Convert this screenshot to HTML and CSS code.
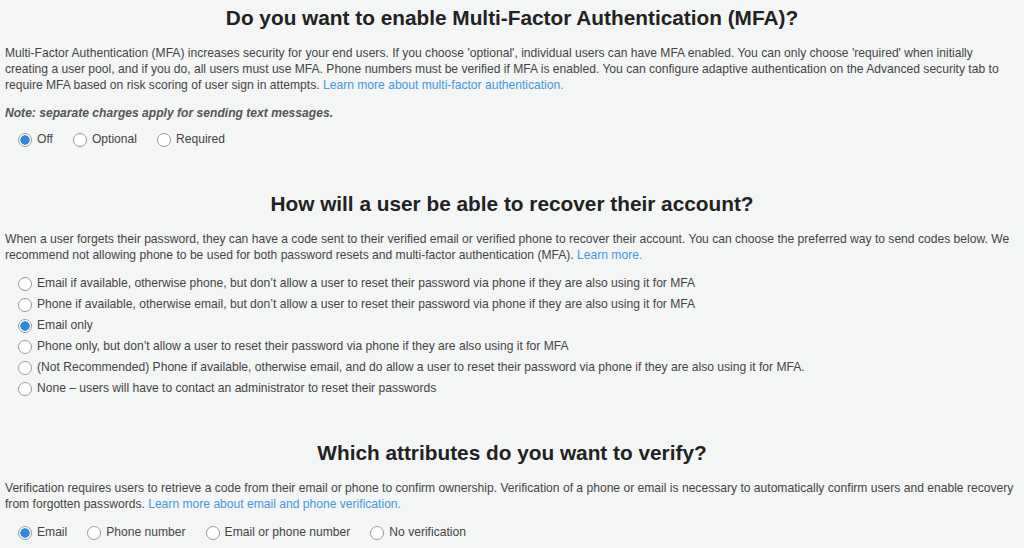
FILE: index.html
```html
<!DOCTYPE html>
<html lang="en">
<head>
    <meta charset="UTF-8">
    <meta name="viewport" content="width=device-width, initial-scale=1.0">
    <title>MFA and verifications</title>
    <link rel="stylesheet" href="styles.css">
</head>
<body>
    <div class="section">
        <h2>Do you want to enable Multi-Factor Authentication (MFA)?</h2>
        <p>Multi-Factor Authentication (MFA) increases security for your end users. If you choose 'optional', individual users can have MFA enabled. You can only choose 'required' when initially creating a user pool, and if you do, all users must use MFA. Phone numbers must be verified if MFA is enabled. You can configure adaptive authentication on the Advanced security tab to require MFA based on risk scoring of user sign in attempts. <a href="#">Learn more about multi-factor authentication.</a></p>
        <p class="note">Note: separate charges apply for sending text messages.</p>
        <div class="options inline">
            <label><input type="radio" name="mfa" checked> Off</label>
            <label><input type="radio" name="mfa"> Optional</label>
            <label><input type="radio" name="mfa"> Required</label>
        </div>
    </div>

    <div class="section">
        <h2>How will a user be able to recover their account?</h2>
        <p>When a user forgets their password, they can have a code sent to their verified email or verified phone to recover their account. You can choose the preferred way to send codes below. We recommend not allowing phone to be used for both password resets and multi-factor authentication (MFA). <a href="#">Learn more.</a></p>
        <div class="options stacked">
            <label><input type="radio" name="recovery"> Email if available, otherwise phone, but don’t allow a user to reset their password via phone if they are also using it for MFA</label>
            <label><input type="radio" name="recovery"> Phone if available, otherwise email, but don’t allow a user to reset their password via phone if they are also using it for MFA</label>
            <label><input type="radio" name="recovery" checked> Email only</label>
            <label><input type="radio" name="recovery"> Phone only, but don’t allow a user to reset their password via phone if they are also using it for MFA</label>
            <label><input type="radio" name="recovery"> (Not Recommended) Phone if available, otherwise email, and do allow a user to reset their password via phone if they are also using it for MFA.</label>
            <label><input type="radio" name="recovery"> None – users will have to contact an administrator to reset their passwords</label>
        </div>
    </div>

    <div class="section">
        <h2>Which attributes do you want to verify?</h2>
        <p>Verification requires users to retrieve a code from their email or phone to confirm ownership. Verification of a phone or email is necessary to automatically confirm users and enable recovery from forgotten passwords. <a href="#">Learn more about email and phone verification.</a></p>
        <div class="options inline">
            <label><input type="radio" name="verify" checked> Email</label>
            <label><input type="radio" name="verify"> Phone number</label>
            <label><input type="radio" name="verify"> Email or phone number</label>
            <label><input type="radio" name="verify"> No verification</label>
        </div>
    </div>
</body>
</html>
```

FILE: styles.css
```css
body {
    font-family: 'Liberation Sans', Arial, sans-serif;
    font-size: 12.1px;
    color: #444444;
    background-color: #f4f5f5;
    margin: 0;
    padding: 0 5px 0 5px;
}
.section {
    padding-bottom: 38px;
}
h2 {
    color: #222222;
    font-size: 20.8px;
    font-weight: bold;
    text-align: center;
    margin: 0;
    padding: 6px 0 15px;
}
p {
    margin: 0 0 12px;
    line-height: 16px;
}
a {
    color: #4199de; /* light blue link */
    text-decoration: none;
}
.note {
    font-style: italic;
    font-weight: bold;
    color: #555555;
    margin-bottom: 10px;
}
.options {
    padding-left: 13px;
}
.options.inline {
    display: flex;
    gap: 20px;
}
.options.stacked {
    display: flex;
    flex-direction: column;
    gap: 4px;
}
.options label {
    display: flex;
    align-items: center;
    gap: 5px;
    line-height: 17px;
}
input[type="radio"] {
    appearance: none;
    -webkit-appearance: none;
    width: 14px;
    height: 14px;
    margin: 0;
    border: 1px solid #9a9a9a;
    border-radius: 50%;
    background-color: #ffffff;
}
input[type="radio"]:checked {
    background: radial-gradient(circle, #2f88dc 0, #2f88dc 4.4px, #ffffff 5px);
}
```
